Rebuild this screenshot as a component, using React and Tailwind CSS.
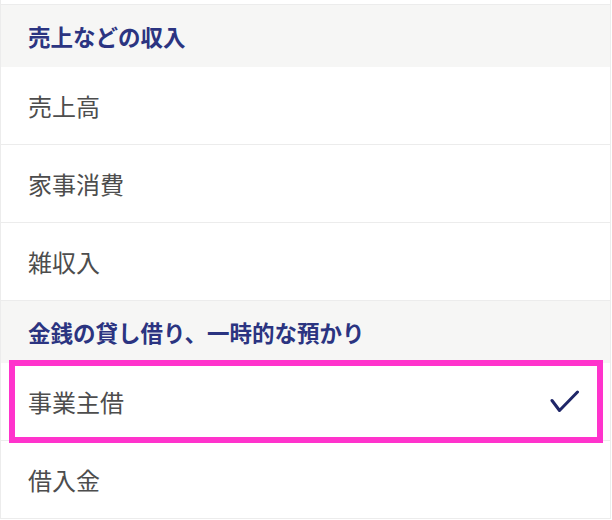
import React from 'react'

const sections = [
  {
    title: '売上などの収入',
    items: [{ name: '売上高' }, { name: '家事消費' }, { name: '雑収入' }],
  },
  {
    title: '金銭の貸し借り、一時的な預かり',
    items: [{ name: '事業主借', selected: true }, { name: '借入金' }],
  },
]

function Check() {
  return (
    <svg width="30" height="24" viewBox="0 0 30 24" fill="none" className="text-[#1f2668]">
      <path d="M2 10.5 L9.5 20.5 L27.5 2" stroke="currentColor" strokeWidth="3" strokeLinecap="round" strokeLinejoin="round" />
    </svg>
  )
}

export default function App() {
  return (
    <div className="w-[612px] h-[520px] bg-white overflow-hidden" style={{ fontFamily: '"Noto Sans CJK JP", "Noto Sans", sans-serif' }}>
      <div className="w-[611px] border-x border-[#ececec]">
        <div className="h-[4px]" />
        <div className="border-t border-[#ececec]">
          {sections.map((section) => (
            <div key={section.title}>
              {/* 見出し */}
              <div className="h-[62px] bg-[#f6f6f5] flex items-center px-[27px]">
                <span className="text-[22.5px] font-bold text-[#2b3481] leading-none">{section.title}</span>
              </div>
              {section.items.map((item) => (
                <div key={item.name}
                  className="relative h-[78px] border-b border-[#ececec] flex items-center justify-between pl-[27px] pr-[30px]">
                  <span className="text-[24px] text-[#4d4d4d] leading-none">{item.name}</span>
                  {item.selected && <Check />}
                  {item.selected && (
                    <div className="absolute left-[8px] right-[7px] -top-[3px] -bottom-[3px] border-[6px] border-[#ff33cc] pointer-events-none" />
                  )}
                </div>
              ))}
            </div>
          ))}
        </div>
      </div>
    </div>
  )
}
